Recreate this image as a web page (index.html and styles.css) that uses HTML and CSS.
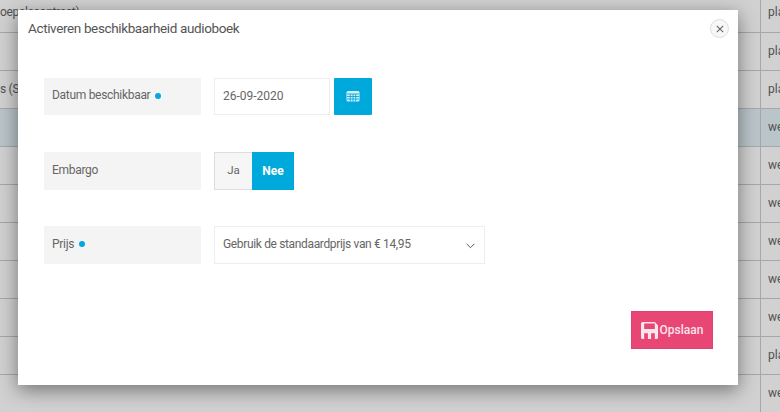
FILE: index.html
```html
<!DOCTYPE html>
<html lang="nl">
<head>
    <meta charset="UTF-8">
    <meta name="viewport" content="width=device-width, initial-scale=1.0">
    <title>Activeren beschikbaarheid audioboek</title>
    <link rel="stylesheet" href="styles.css">
</head>
<body>
    <div class="table">
        <div class="row first"><div class="cell-main">oepslecontract)</div><div class="cell-side">plaatsen</div></div>
        <div class="row"><div class="cell-main"></div><div class="cell-side">plaatsen</div></div>
        <div class="row"><div class="cell-main">s (Spaans)</div><div class="cell-side">plaatsen</div></div>
        <div class="row selected"><div class="cell-main"></div><div class="cell-side">weigeren</div></div>
        <div class="row"><div class="cell-main"></div><div class="cell-side">weigeren</div></div>
        <div class="row"><div class="cell-main"></div><div class="cell-side">weigeren</div></div>
        <div class="row"><div class="cell-main"></div><div class="cell-side">weigeren</div></div>
        <div class="row"><div class="cell-main"></div><div class="cell-side">weigeren</div></div>
        <div class="row"><div class="cell-main"></div><div class="cell-side">weigeren</div></div>
        <div class="row"><div class="cell-main"></div><div class="cell-side">plaatsen</div></div>
        <div class="row"><div class="cell-main"></div><div class="cell-side">weigeren</div></div>
    </div>

    <div class="overlay"></div>

    <div class="modal">
        <div class="modal-header">
            <h1 class="modal-title">Activeren beschikbaarheid audioboek</h1>
            <button class="close-btn" aria-label="Sluiten">
                <svg width="8" height="8" viewBox="0 0 8 8"><path d="M0.8 0.8 L7.2 7.2 M7.2 0.8 L0.8 7.2" stroke="#666" stroke-width="1.1" fill="none"/></svg>
            </button>
        </div>

        <div class="form-row date-row">
            <div class="form-label">Datum beschikbaar <span class="dot"></span></div>
            <div class="date-input">26-09-2020</div>
            <button class="calendar-btn" aria-label="Kalender">
                <svg class="calendar-icon" width="14" height="12" viewBox="0 0 14 12">
                    <rect x="0.5" y="1" width="13" height="10.5" rx="1.5" fill="#d5f0f9"/>
                    <path d="M1 4H13M1 6.5H13M1 9H13M4.3 4V11.5M7 4V11.5M9.7 4V11.5" stroke="#00a9dc" stroke-width="0.9" fill="none"/>
                </svg>
            </button>
        </div>

        <div class="form-row embargo-row">
            <div class="form-label">Embargo</div>
            <div class="toggle">
                <div class="toggle-off">Ja</div>
                <div class="toggle-on">Nee</div>
            </div>
        </div>

        <div class="form-row price-row">
            <div class="form-label">Prijs <span class="dot"></span></div>
            <div class="select-box">
                <span>Gebruik de standaardprijs van € 14,95</span>
                <svg class="chevron" width="9" height="6" viewBox="0 0 9 6"><path d="M0.7 0.9 L4.5 4.7 L8.3 0.9" stroke="#555" stroke-width="1" fill="none"/></svg>
            </div>
        </div>

        <div class="modal-footer">
            <button class="save-btn">
                <svg width="17" height="17" viewBox="0 0 16 16">
                    <path fill-rule="evenodd" d="M1.500 0H13L16 3V14.500A1.500 1.500 0 0 1 14.500 16H1.500A1.500 1.500 0 0 1 0 14.500V1.500A1.500 1.500 0 0 1 1.500 0ZM3 1.500V6.500H13V1.500ZM3 10.500V16H6.500V10.500ZM9.500 10.500V16H13V10.500Z" fill="#fde3ea"/>
                </svg>
                Opslaan
            </button>
        </div>
    </div>
</body>
</html>
```

FILE: styles.css
```css
html, body {
    margin: 0;
    padding: 0;
    height: 100%;
    overflow: hidden;
}

body {
    font-family: Roboto, "Liberation Sans", sans-serif;
    font-size: 12px;
    color: #666;
    background-color: #fff;
}

.table {
    height: 412px;
    overflow: hidden;
}

.row {
    display: flex;
    height: 37px;
    border-bottom: 1px solid #ccc;
    font-size: 12px;
}

.row.first {
    height: 32px;
}

.row.first .cell-main,
.row.first .cell-side {
    padding-bottom: 8px;
}

.row.selected {
    background-color: #e3f1f6;
}

.cell-main {
    flex: 1;
    display: flex;
    align-items: center;
    padding-bottom: 2px;
    overflow: hidden;
    white-space: nowrap;
    letter-spacing: -0.3px;
}

.cell-side {
    width: 12px;
    padding-left: 7px;
    padding-bottom: 2px;
    border-left: 1px solid #ccc;
    display: flex;
    align-items: center;
    overflow: hidden;
    white-space: nowrap;
}

.overlay {
    position: absolute;
    top: 0;
    left: 0;
    right: 0;
    bottom: 0;
    background-color: rgba(0, 0, 0, 0.18);
}

.modal {
    position: absolute;
    top: 10px;
    left: 18px;
    width: 720px;
    height: 375px;
    box-sizing: border-box;
    padding: 0 25px 0 26px;
    background-color: #fff;
    box-shadow: 0 5px 18px rgba(0, 0, 0, 0.45);
    display: flex;
    flex-direction: column;
}

.modal-header {
    display: flex;
    align-items: center;
    justify-content: space-between;
    height: 36px;
    margin: 0 -16px;
}

.modal-title {
    margin: 0;
    font-size: 13.5px;
    font-weight: 400;
    letter-spacing: -0.37px;
    color: #555;
}

.close-btn {
    width: 19px;
    height: 19px;
    padding: 0;
    border: 1px solid #ddd;
    border-radius: 50%;
    background-color: #f7f7f7;
    display: flex;
    align-items: center;
    justify-content: center;
    margin-top: 1px;
}

.form-row {
    display: flex;
    gap: 13px;
    align-items: stretch;
}

.date-row {
    margin-top: 32px;
    height: 37px;
}

.embargo-row {
    margin-top: 37px;
    height: 38px;
}

.price-row {
    margin-top: 36px;
    height: 38px;
}

.form-label {
    width: 157px;
    box-sizing: border-box;
    padding: 0 8px 3px;
    background-color: #f4f4f4;
    display: flex;
    align-items: center;
    gap: 5px;
    font-size: 12px;
    letter-spacing: -0.3px;
}

.dot {
    width: 6px;
    height: 6px;
    border-radius: 50%;
    background-color: #00a9dc;
    margin-top: 1px;
}

.date-input {
    width: 116px;
    box-sizing: border-box;
    padding: 0 8px 1px;
    border: 1px solid #eee;
    display: flex;
    align-items: center;
    font-size: 12px;
}

.calendar-btn {
    width: 38px;
    padding: 0 0 2px;
    margin-left: -9px;
    border: 0;
    border-radius: 1px;
    background-color: #00a9dc;
    display: flex;
    align-items: center;
    justify-content: center;
}

.toggle {
    display: flex;
}

.toggle-off {
    width: 38px;
    box-sizing: border-box;
    padding-bottom: 3px;
    border: 1px solid #ddd;
    border-right: 0;
    background-color: #f6f6f6;
    display: flex;
    align-items: center;
    justify-content: center;
    font-size: 11.5px;
}

.toggle-on {
    width: 42px;
    background-color: #00a9dc;
    color: #fff;
    font-weight: 700;
    display: flex;
    align-items: center;
    justify-content: center;
    font-size: 12px;
}

.select-box {
    width: 271px;
    box-sizing: border-box;
    padding: 0 9px 2px 8px;
    border: 1px solid #eee;
    display: flex;
    align-items: center;
    justify-content: space-between;
    font-size: 12px;
    letter-spacing: -0.35px;
}

.chevron {
    margin-top: 3px;
}

.modal-footer {
    display: flex;
    justify-content: flex-end;
    margin-top: 47px;
}

.save-btn {
    height: 38px;
    width: 82px;
    padding: 0;
    border: 1px solid #de4470;
    background-color: #e84674;
    color: #fde3ea;
    font-family: inherit;
    font-size: 12px;
    font-weight: 500;
    display: flex;
    align-items: center;
    justify-content: center;
    gap: 2px;
}
```
